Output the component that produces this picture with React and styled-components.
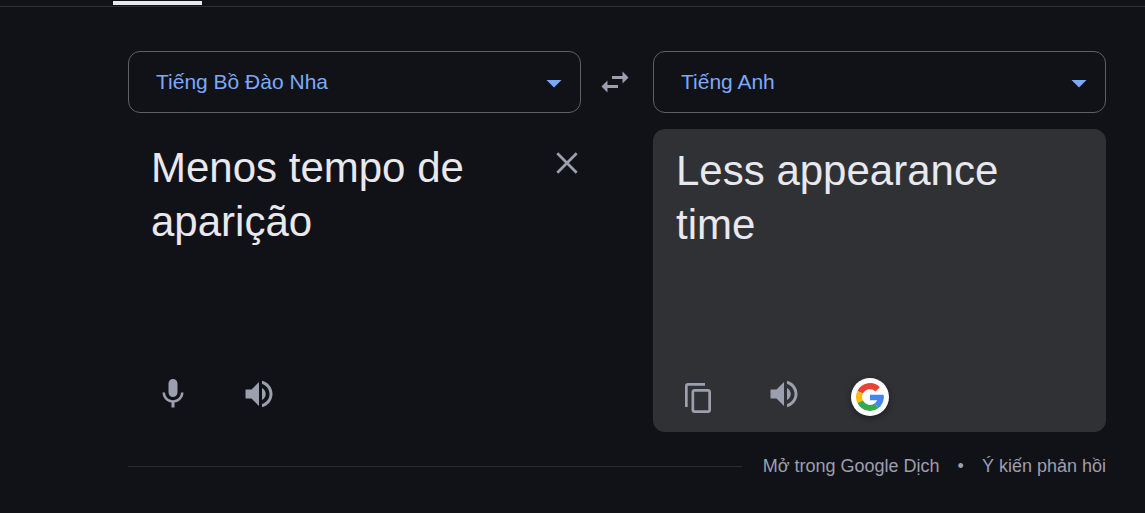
import React, { useState } from 'react';
import styled, { createGlobalStyle } from 'styled-components';

const GlobalStyle = createGlobalStyle`
  :root {
    --bg: #111217;
    --panel: #303134;
    --line: #2d2e33;
    --outline: #5f6066;
    --text: #e8e8ee;
    --muted: #9c9fae;
    --blue: #7ba9fb;
  }
  * {
    box-sizing: border-box;
  }
  body {
    margin: 0;
    background: var(--bg);
    color: var(--text);
    font-family: 'Liberation Sans', Arial, sans-serif;
  }
  button,
  select,
  textarea {
    font-family: inherit;
    margin: 0;
  }
`;

const VolumeIcon = () => (
  <Icon size={36} viewBox="0 0 24 24">
    <path d="M3 9v6h4l5 5V4L7 9H3zm13.5 3c0-1.77-1.02-3.29-2.5-4.03v8.05c1.48-.73 2.5-2.25 2.5-4.02zM14 3.23v2.06c2.89.86 5 3.54 5 6.71s-2.11 5.85-5 6.71v2.06c4.01-.91 7-4.49 7-8.77s-2.99-7.86-7-8.77z" />
  </Icon>
);

const MicIcon = () => (
  <Icon size={36} viewBox="0 0 24 24">
    <path d="M12 14c1.66 0 2.99-1.34 2.99-3L15 5c0-1.66-1.34-3-3-3S9 3.34 9 5v6c0 1.66 1.34 3 3 3zm5.3-3c0 3-2.54 5.1-5.3 5.1S6.7 14 6.7 11H5c0 3.41 2.72 6.23 6 6.72V21h2v-3.28c3.28-.48 6-3.3 6-6.72h-1.7z" />
  </Icon>
);

const CopyIcon = () => (
  <Icon size={32} viewBox="-3 -2 32 32">
    <path d="M20 0H3C1.3 0 0 1.3 0 3v21h2.7V2.7H20z" />
    <path d="M23 6H9.5c-1.6 0-3 1.3-3 3v18c0 1.7 1.4 3 3 3H23c1.7 0 3-1.3 3-3V9c0-1.7-1.3-3-3-3zm.3 21.3H9.2V8.7h14.1z" />
  </Icon>
);

const SwapIcon = () => (
  <Icon size={36} viewBox="0 0 24 24">
    <path d="M6.99 11L3 15l3.99 4v-3H14v-2H6.99v-3zM21 9l-3.99-4v3H10v2h7.01v3L21 9z" />
  </Icon>
);

const CloseIcon = () => (
  <Icon size={22} viewBox="0 0 22 22">
    <path
      d="M1.3 1.3l19.4 19.4M20.7 1.3L1.3 20.7"
      stroke="currentColor"
      strokeWidth="2.7"
    />
  </Icon>
);

const GoogleIcon = () => (
  <Icon size={28} viewBox="0 0 48 48">
    <g fill="none" strokeWidth="10.4">
      <path stroke="#ea4335" d="M7.2 15.8A18.7 18.7 0 0 1 37.2 10.8" />
      <path stroke="#fbbc05" d="M7.2 32.2A18.7 18.7 0 0 1 7.2 15.8" />
      <path stroke="#34a853" d="M35.5 38.7A18.7 18.7 0 0 1 7.2 32.2" />
      <path stroke="#4285f4" d="M42.5 24.5A18.7 18.7 0 0 1 35.5 38.7" />
    </g>
    <path fill="#4285f4" d="M24 20h23.3l.4 5L44 29.4H24z" />
  </Icon>
);

const LanguageSelect = ({ label, options }) => (
  <SelectWrapper>
    <Select aria-label={label} defaultValue={options[0]}>
      {options.map(option => (
        <option key={option}>{option}</option>
      ))}
    </Select>
    <Caret viewBox="0 0 24 24">
      <path d="M7 10l5 5 5-5z" />
    </Caret>
  </SelectWrapper>
);

const App = () => {
  const [text, setText] = useState('Menos tempo de aparição');

  return (
    <>
      <GlobalStyle />
      <TabBar>
        <ActiveTab />
      </TabBar>
      <Translator>
        <Columns>
          <LanguageSelect
            label="Ngôn ngữ nguồn"
            options={['Tiếng Bồ Đào Nha', 'Tiếng Anh']}
          />
          <SwapButton type="button" aria-label="Hoán đổi ngôn ngữ">
            <SwapIcon />
          </SwapButton>
          <LanguageSelect
            label="Ngôn ngữ đích"
            options={['Tiếng Anh', 'Tiếng Bồ Đào Nha']}
          />

          <SourcePanel>
            <SourceRow>
              <SourceText
                aria-label="Văn bản nguồn"
                spellCheck={false}
                value={text}
                onChange={e => setText(e.target.value)}
              />
              <ClearButton
                type="button"
                aria-label="Xóa văn bản"
                onClick={() => setText('')}
              >
                <CloseIcon />
              </ClearButton>
            </SourceRow>
            <Tools>
              <ToolButton type="button" aria-label="Nói">
                <MicIcon />
              </ToolButton>
              <ToolButton type="button" aria-label="Nghe">
                <VolumeIcon />
              </ToolButton>
            </Tools>
          </SourcePanel>

          <ResultPanel>
            <ResultText>Less appearance time</ResultText>
            <Tools>
              <ToolButton type="button" aria-label="Sao chép" $align="center">
                <CopyIcon />
              </ToolButton>
              <ToolButton type="button" aria-label="Nghe">
                <VolumeIcon />
              </ToolButton>
              <ToolButton type="button" aria-label="Google" $align="center">
                <Badge>
                  <GoogleIcon />
                </Badge>
              </ToolButton>
            </Tools>
          </ResultPanel>
        </Columns>

        <Footer>
          <Rule />
          <FooterLinks>
            <FooterLink href="#translate">Mở trong Google Dịch</FooterLink>
            <span>•</span>
            <FooterLink href="#feedback">Ý kiến phản hồi</FooterLink>
          </FooterLinks>
        </Footer>
      </Translator>
    </>
  );
};

export default App;

const Icon = styled.svg.attrs({ 'aria-hidden': true })`
  display: block;
  flex: none;
  width: ${props => props.size}px;
  height: ${props => props.size}px;
  fill: currentColor;
`;

const TabBar = styled.div`
  padding: 1px 0 1px 113px;
  border-bottom: 1px solid var(--line);
`;

const ActiveTab = styled.div`
  width: 89px;
  height: 4px;
  background: var(--text);
`;

const Translator = styled.main`
  padding: 44px 39px 35px 128px;
`;

const Columns = styled.div`
  display: grid;
  grid-template-columns: 1fr 72px 1fr;
  row-gap: 16px;
`;

const SelectWrapper = styled.div`
  position: relative;
`;

const Select = styled.select`
  display: block;
  appearance: none;
  width: 100%;
  height: 62px;
  padding: 0 60px 2px 27px;
  border: 1px solid var(--outline);
  border-radius: 12px;
  background: transparent;
  color: var(--blue);
  font-size: 21px;
`;

const Caret = styled.svg`
  position: absolute;
  top: 14px;
  right: 9px;
  width: 36px;
  height: 36px;
  fill: var(--blue);
  pointer-events: none;
`;

const PlainButton = styled.button`
  display: flex;
  justify-content: center;
  padding: 0;
  border: 0;
  background: none;
  color: var(--muted);
  cursor: pointer;
`;

const SwapButton = styled(PlainButton)`
  align-items: center;
  width: 68px;
`;

const Panel = styled.section`
  display: flex;
  flex-direction: column;
  min-width: 0;
  min-height: 303px;
  padding-bottom: 14px;
  border-radius: 12px;
`;

const SourcePanel = styled(Panel)`
  grid-column: 1;
`;

const ResultPanel = styled(Panel)`
  grid-column: 3;
  background: var(--panel);
`;

const SourceRow = styled.div`
  display: flex;
  flex: 1;
  align-items: flex-start;
`;

const SourceText = styled.textarea`
  flex: 1;
  align-self: stretch;
  min-width: 0;
  padding: 12px 0 0 23px;
  border: 0;
  outline: 0;
  resize: none;
  background: transparent;
  color: var(--text);
  font-size: 42px;
  line-height: 54px;
`;

const ClearButton = styled(PlainButton)`
  align-items: center;
  width: 28px;
  height: 28px;
  margin-top: 20px;
`;

const ResultText = styled.p`
  flex: 1;
  margin: 0;
  padding: 15px 23px 0 23px;
  font-size: 42px;
  line-height: 54px;
`;

const Tools = styled.div`
  display: flex;
  gap: 38px;
  padding-left: 21px;
`;

const ToolButton = styled(PlainButton)`
  align-items: ${props => props.$align || 'flex-start'};
  width: 48px;
  height: 42px;
`;

const Badge = styled.span`
  display: flex;
  align-items: center;
  justify-content: center;
  width: 38px;
  height: 38px;
  border-radius: 50%;
  background: #fff;
  box-shadow: 0 2px 6px rgba(0, 0, 0, 0.4);
`;

const Footer = styled.footer`
  display: flex;
  align-items: center;
  gap: 21px;
  margin-top: 22px;
`;

const Rule = styled.div`
  flex: 1;
  height: 1px;
  background: var(--line);
`;

const FooterLinks = styled.div`
  display: flex;
  gap: 18px;
  color: var(--muted);
  font-size: 18px;
  line-height: 24px;
`;

const FooterLink = styled.a`
  color: inherit;
  text-decoration: none;
`;
